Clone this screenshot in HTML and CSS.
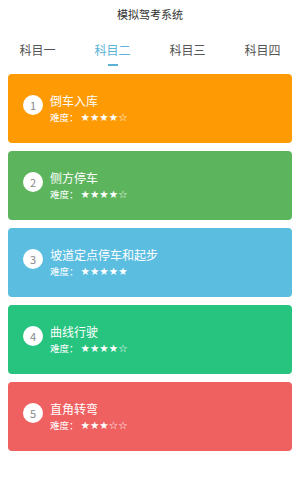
FILE: index.html
```html
<!DOCTYPE html>
<html lang="zh-CN">
<head>
  <meta charset="UTF-8">
  <meta name="viewport" content="width=device-width, initial-scale=1.0">
  <title>模拟驾考系统</title>
  <link rel="stylesheet" href="styles.css">
</head>
<body>
  <div class="header">模拟驾考系统</div>
  <div class="tabs">
    <div class="tab">科目一</div>
    <div class="tab active">科目二</div>
    <div class="tab">科目三</div>
    <div class="tab">科目四</div>
  </div>
  <div class="list">
    <div class="card orange">
      <div class="num">1</div>
      <div class="info">
        <div class="name">倒车入库</div>
        <div class="level">难度：<span class="stars">★★★★☆</span></div>
      </div>
    </div>
    <div class="card green">
      <div class="num">2</div>
      <div class="info">
        <div class="name">侧方停车</div>
        <div class="level">难度：<span class="stars">★★★★☆</span></div>
      </div>
    </div>
    <div class="card blue">
      <div class="num">3</div>
      <div class="info">
        <div class="name">坡道定点停车和起步</div>
        <div class="level">难度：<span class="stars">★★★★★</span></div>
      </div>
    </div>
    <div class="card teal">
      <div class="num">4</div>
      <div class="info">
        <div class="name">曲线行驶</div>
        <div class="level">难度：<span class="stars">★★★★☆</span></div>
      </div>
    </div>
    <div class="card red">
      <div class="num">5</div>
      <div class="info">
        <div class="name">直角转弯</div>
        <div class="level">难度：<span class="stars">★★★☆☆</span></div>
      </div>
    </div>
  </div>
</body>
</html>
```

FILE: styles.css
```css
* {
  margin: 0;
  padding: 0;
  box-sizing: border-box;
}

body {
  font-family: "Noto Sans CJK SC", "Noto Sans", sans-serif;
  background: #fff;
  color: #333;
}

/* Header */
.header {
  height: 28px;
  line-height: 28px;
  text-align: center;
  font-size: 11px;
  color: #333;
}

/* Tabs */
.tabs {
  display: flex;
  height: 46px;
}

.tab {
  flex: 1;
  text-align: center;
  font-size: 12px;
  color: #555;
  padding-top: 13px;
  line-height: 18px;
}

.tab.active {
  color: #5ab2d6;
}

.tab.active::after {
  content: "";
  display: block;
  width: 10px;
  height: 2px;
  margin: 5px auto 0;
  background: #5ab2d6;
}

/* Cards */
.list {
  padding: 0 8px;
}

.card {
  display: flex;
  align-items: center;
  height: 69px;
  margin-bottom: 8px;
  padding-left: 15px;
  border-radius: 4px;
  color: #fff;
}

.orange { background: #fe9a04; }
.green { background: #5cb45d; }
.blue { background: #5bbee0; }
.teal { background: #26c47f; }
.red { background: #ef6161; }

.num {
  width: 20px;
  height: 20px;
  line-height: 20px;
  border-radius: 50%;
  background: #fff;
  color: #888;
  text-align: center;
  font-size: 11px;
  margin-bottom: 7px;
  margin-right: 7px;
}

.name {
  font-size: 12px;
  line-height: 16px;
}

.level {
  font-size: 9.5px;
  line-height: 16px;
}

.stars {
  font-family: "DejaVu Sans", sans-serif;
  font-size: 10.5px;
  margin-left: 2px;
}
```
